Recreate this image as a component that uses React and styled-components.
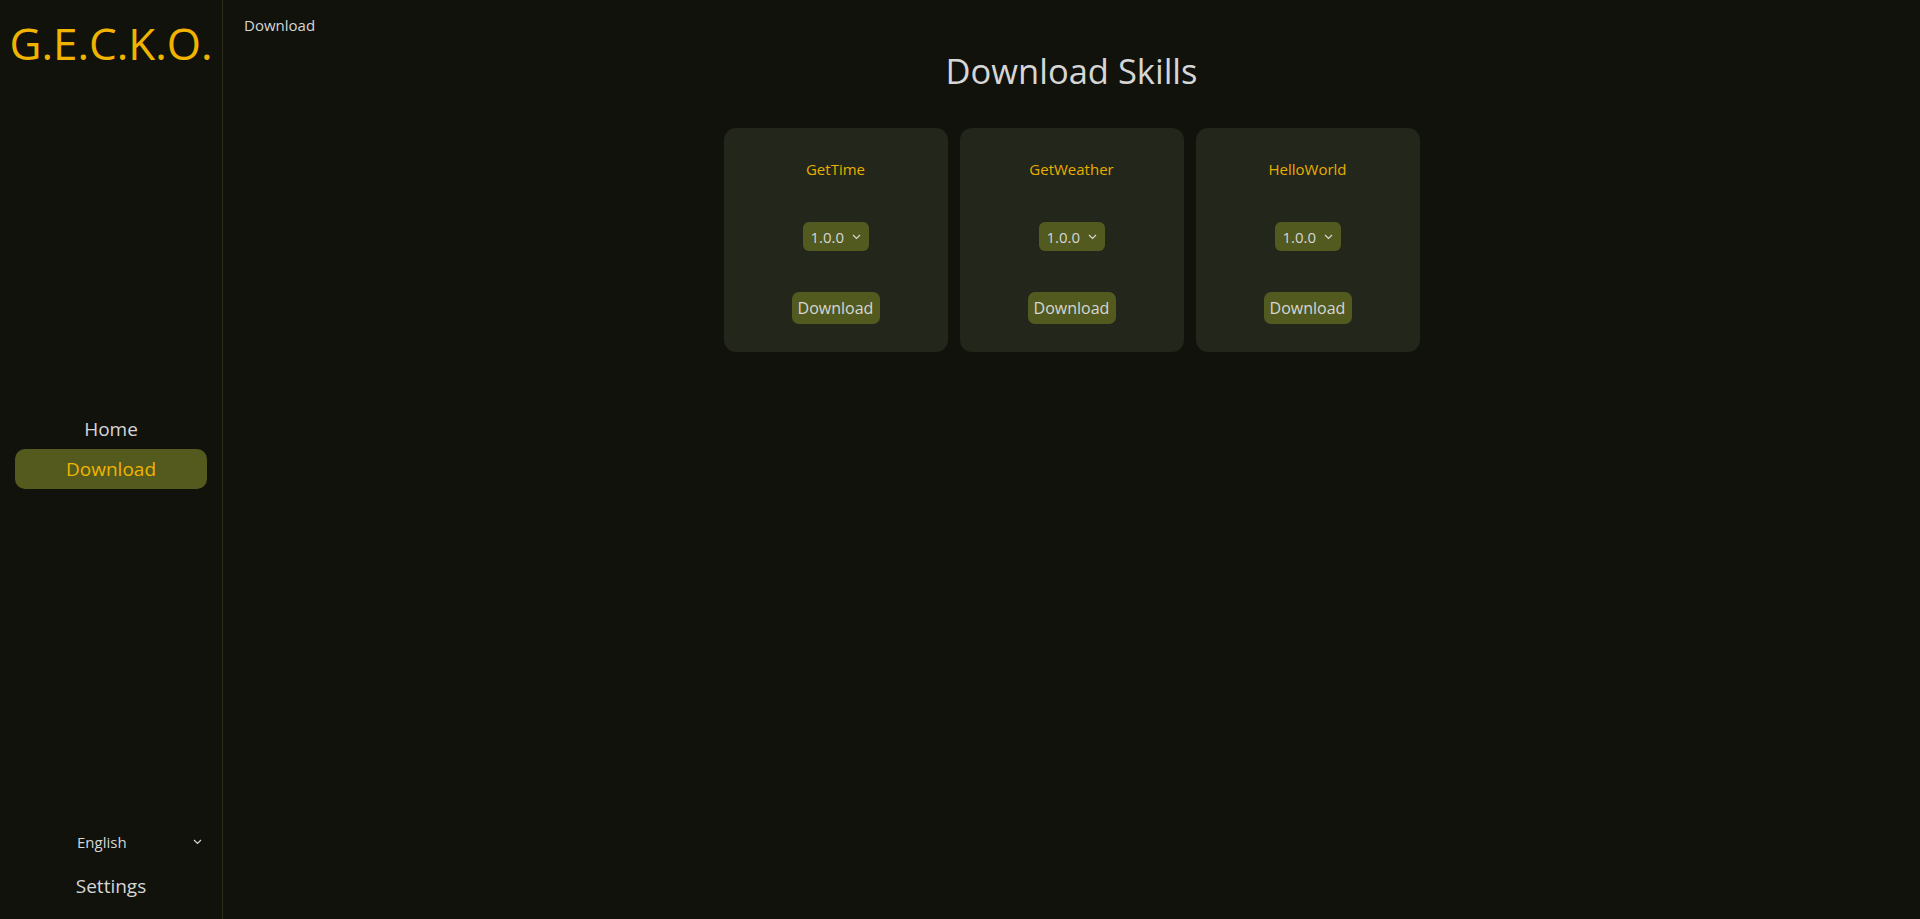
import React from 'react'
import styled, { createGlobalStyle } from 'styled-components'

const GlobalStyle = createGlobalStyle`
  html, body {
    margin: 0;
    padding: 0;
    background: #11120b;
    font-family: "Segoe UI", "Open Sans", "Noto Sans", sans-serif;
    color: #d6d6d6;
  }
  * { box-sizing: border-box; }
`

const Shell = styled.div`
  display: flex;
  height: 919px;
  background: #11120b;
`

const Sidebar = styled.aside`
  width: 223px;
  flex-shrink: 0;
  display: flex;
  flex-direction: column;
  border-right: 1px solid #2b2e1c;
`

const Logo = styled.div`
  color: #f0b400;
  font-size: 44px;
  font-weight: 400;
  text-align: center;
  padding-top: 12px;
  line-height: 62px;
`

const Nav = styled.nav`
  flex: 1;
  display: flex;
  flex-direction: column;
  justify-content: center;
  gap: 4px;
  padding: 0 15px 2px;
`

const NavItem = styled.div`
  height: ${p => (p.$active ? '40px' : '32px')};
  border-radius: 10px;
  display: flex;
  align-items: center;
  justify-content: center;
  font-size: 19px;
  color: ${p => (p.$active ? '#f0b400' : '#d6d6d6')};
  background: ${p => (p.$active ? '#545a1e' : 'transparent')};
`

const Bottom = styled.div`
  display: flex;
  flex-direction: column;
  align-items: stretch;
  padding: 0 0 17px 0;
  gap: 16px;
`

const LangSelect = styled.div`
  display: flex;
  align-items: center;
  justify-content: space-between;
  padding: 0 20px 0 77px;
  font-size: 15px;
  height: 24px;
`

const Settings = styled.div`
  font-size: 19px;
  height: 32px;
  display: flex;
  align-items: center;
  justify-content: center;
`

const Main = styled.main`
  flex: 1;
  display: flex;
  flex-direction: column;
  padding: 14px 21px;
`

const Crumb = styled.div`
  font-size: 15px;
  color: #d6d6d6;
  line-height: 22px;
`

const Title = styled.h1`
  margin: 11px 0 0 0;
  text-align: center;
  font-size: 34.5px;
  font-weight: 400;
  line-height: 48px;
  color: #d6d6d6;
`

const CardRow = styled.div`
  display: flex;
  justify-content: center;
  gap: 12px;
  margin-top: 33px;
`

const Card = styled.div`
  width: 224px;
  height: 224px;
  background: #23261a;
  border-radius: 12px;
  display: flex;
  flex-direction: column;
  align-items: center;
  padding-top: 29px;
`

const SkillName = styled.div`
  color: #e8ae00;
  font-size: 15px;
  line-height: 24px;
`

const Select = styled.div`
  margin-top: 41px;
  height: 29px;
  width: 66px;
  border-radius: 6px;
  background: #525a1f;
  display: flex;
  align-items: center;
  justify-content: space-between;
  padding: 0 8px 0 8px;
  font-size: 15px;
  color: #d6d6d6;
`

const Button = styled.div`
  margin-top: 41px;
  height: 32px;
  width: 88px;
  border-radius: 7px;
  background: #525a1f;
  display: flex;
  align-items: center;
  justify-content: center;
  font-size: 16px;
  color: #d6d6d6;
`

const Chevron = () => (
  <svg width="9" height="6" viewBox="0 0 9 6" fill="none">
    <path d="M1 1l3.5 3.5L8 1" stroke="#d6d6d6" strokeWidth="1.2" />
  </svg>
)

const skills = ['GetTime', 'GetWeather', 'HelloWorld']

export default function App() {
  return (
    <>
      <GlobalStyle />
      <Shell>
        <Sidebar>
          <Logo>G.E.C.K.O.</Logo>
          <Nav>
            <NavItem>Home</NavItem>
            <NavItem $active>Download</NavItem>
          </Nav>
          <Bottom>
            <LangSelect>
              <span>English</span>
              <Chevron />
            </LangSelect>
            <Settings>Settings</Settings>
          </Bottom>
        </Sidebar>
        <Main>
          <Crumb>Download</Crumb>
          <Title>Download Skills</Title>
          <CardRow>
            {skills.map(s => (
              <Card key={s}>
                <SkillName>{s}</SkillName>
                <Select>
                  <span>1.0.0</span>
                  <Chevron />
                </Select>
                <Button>Download</Button>
              </Card>
            ))}
          </CardRow>
        </Main>
      </Shell>
    </>
  )
}
